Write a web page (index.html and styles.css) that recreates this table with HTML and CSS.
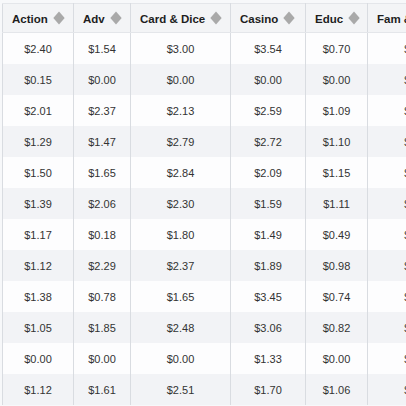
FILE: index.html
```html
<!DOCTYPE html>
<html>
<head>
<meta charset="utf-8">
<link rel="stylesheet" href="styles.css">
</head>
<body>
<table class="grid">
  <colgroup>
    <col class="c-action"><col class="c-adv"><col class="c-card"><col class="c-casino"><col class="c-educ"><col class="c-fam">
  </colgroup>
  <thead>
    <tr>
      <th><span class="lbl">Action</span><span class="sort"></span></th>
      <th><span class="lbl">Adv</span><span class="sort"></span></th>
      <th><span class="lbl">Card &amp; Dice</span><span class="sort"></span></th>
      <th><span class="lbl">Casino</span><span class="sort"></span></th>
      <th><span class="lbl">Educ</span><span class="sort"></span></th>
      <th><span class="lbl">Fam &amp; Kids</span><span class="sort"></span></th>
    </tr>
  </thead>
  <tbody>
    <tr><td>$2.40</td><td>$1.54</td><td>$3.00</td><td>$3.54</td><td>$0.70</td><td>$0.95</td></tr>
    <tr><td>$0.15</td><td>$0.00</td><td>$0.00</td><td>$0.00</td><td>$0.00</td><td>$0.00</td></tr>
    <tr><td>$2.01</td><td>$2.37</td><td>$2.13</td><td>$2.59</td><td>$1.09</td><td>$1.45</td></tr>
    <tr><td>$1.29</td><td>$1.47</td><td>$2.79</td><td>$2.72</td><td>$1.10</td><td>$2.05</td></tr>
    <tr><td>$1.50</td><td>$1.65</td><td>$2.84</td><td>$2.09</td><td>$1.15</td><td>$1.60</td></tr>
    <tr><td>$1.39</td><td>$2.06</td><td>$2.30</td><td>$1.59</td><td>$1.11</td><td>$1.25</td></tr>
    <tr><td>$1.17</td><td>$0.18</td><td>$1.80</td><td>$1.49</td><td>$0.49</td><td>$1.30</td></tr>
    <tr><td>$1.12</td><td>$2.29</td><td>$2.37</td><td>$1.89</td><td>$0.98</td><td>$0.85</td></tr>
    <tr><td>$1.38</td><td>$0.78</td><td>$1.65</td><td>$3.45</td><td>$0.74</td><td>$0.90</td></tr>
    <tr><td>$1.05</td><td>$1.85</td><td>$2.48</td><td>$3.06</td><td>$0.82</td><td>$0.70</td></tr>
    <tr><td>$0.00</td><td>$0.00</td><td>$0.00</td><td>$1.33</td><td>$0.00</td><td>$0.00</td></tr>
    <tr><td>$1.12</td><td>$1.61</td><td>$2.51</td><td>$1.70</td><td>$1.06</td><td>$1.20</td></tr>
  </tbody>
</table>
</body>
</html>
```
FILE: styles.css
```css
html, body {
  margin: 0;
  padding: 0;
  background: #f7f8fa;
  overflow: hidden;
}
body {
  padding: 3px 0 0 2px;
  width: 600px;
}
.grid {
  border-collapse: collapse;
  table-layout: fixed;
  width: 466px;
  font-family: "Liberation Sans", Arial, sans-serif;
  color: #2a2a2a;
}
.c-action { width: 71px; }
.c-adv { width: 57px; }
.c-card { width: 100px; }
.c-casino { width: 75px; }
.c-educ { width: 62px; }
.c-fam { width: 101px; }
.grid th, .grid td {
  border-left: 1px solid #d9dce1;
  border-right: 1px solid #d9dce1;
}
.grid th {
  height: 28px;
  padding: 0 0 0 9px;
  text-align: left;
  font-size: 11.5px;
  font-weight: bold;
  color: #1e1e1e;
  background: #f3f4f6;
  border-top: 1px solid #e4e6ea;
  border-bottom: 1px solid #e4e6ea;
  white-space: nowrap;
}
.lbl {
  vertical-align: middle;
}
.sort {
  display: inline-block;
  width: 8px;
  height: 8px;
  background: #a9a9a9;
  transform: scaleY(1.15) rotate(45deg);
  margin-left: 7px;
  vertical-align: middle;
}
.grid td {
  height: 31px;
  padding: 0;
  text-align: center;
  font-size: 11px;
  color: #333;
}
.grid tbody tr:nth-child(odd) td { background: #fdfdfe; }
.grid tbody tr:nth-child(even) td { background: #f2f3f6; }
```
